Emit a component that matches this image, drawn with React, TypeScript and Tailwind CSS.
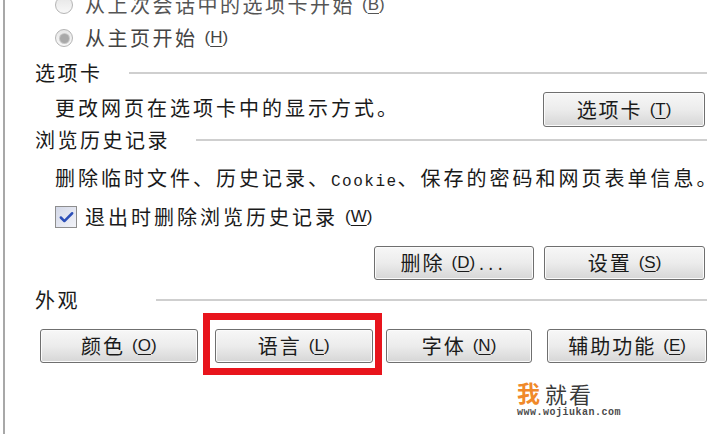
import { Check } from "lucide-react";

const cjk = "font-['Noto_Sans_CJK_SC',sans-serif]";

function Key({ k }: { k: string }) {
  return (
    <span className="ml-[7px] text-[17px] tracking-normal font-['Liberation_Sans',sans-serif]">
      (<span className="underline underline-offset-[3px]">{k}</span>)
    </span>
  );
}

function Btn({ label, k, tail, className }: { label: string; k: string; tail?: string; className: string }) {
  return (
    <button
      className={`h-[34px] rounded-[3px] border border-[#6f6f6f] bg-linear-to-b from-[#f7f7f7] via-[#ececec] to-[#d6d6d6] shadow-[inset_0_0_0_1px_#fbfbfb] flex items-center justify-center text-[20px] tracking-[2px] text-[#1a1a1a] ${className}`}
    >
      {label}
      <Key k={k} />
      {tail && <span className="ml-[4px] tracking-[5px] text-[16px]">{tail}</span>}
    </button>
  );
}

function Radio({ on }: { on?: boolean }) {
  return (
    <span className="w-[18px] h-[18px] rounded-full border border-[#b4b4b4] bg-linear-to-b from-[#e6e6e6] to-[#f8f8f8] flex items-center justify-center">
      {on && <span className="w-[9px] h-[9px] rounded-full bg-[#a9a9a9] ring-1 ring-[#c8c8c8]" />}
    </span>
  );
}

function Heading({ title, gap }: { title: string; gap: string }) {
  return (
    <div className="flex items-center">
      <span className="text-[20px] tracking-[2.5px] text-[#1a1a1a]">{title}</span>
      <span className={`flex-1 h-[2px] bg-[#cfcfcf] ${gap}`} />
    </div>
  );
}

export default function App() {
  return (
    <div className={`w-[721px] h-[434px] overflow-hidden bg-white ${cjk}`}>
      <div className="ml-[3px] h-full border-l-2 border-[#a8a8a8] pl-[30px] pr-[14px] flex flex-col">
        <div className="-mt-[12px] h-[34px] flex items-center pl-[20px] text-[20px] tracking-[2.5px] text-[#555]">
          <Radio />
          <span className="ml-[12px]">从上次会话中的选项卡开始</span>
          <Key k="B" />
        </div>
        <div className="h-[32px] flex items-center pl-[20px] text-[20px] tracking-[2.5px] text-[#444]">
          <Radio on />
          <span className="ml-[12px]">从主页开始</span>
          <Key k="H" />
        </div>

        <div className="h-[38px] flex flex-col justify-center">
          <Heading title="选项卡" gap="ml-[26px]" />
        </div>
        <div className="h-[35px] flex items-center justify-between pl-[20px]">
          <span className="text-[20px] tracking-[3px] text-[#1a1a1a] -mt-[3px]">更改网页在选项卡中的显示方式。</span>
          <Btn label="选项卡" k="T" className="w-[162px] h-[35px] mr-[2px]" />
        </div>

        <div className="h-[26px] flex flex-col justify-center">
          <Heading title="浏览历史记录" gap="ml-[26px]" />
        </div>
        <div className="h-[50px] flex items-center pl-[20px]">
          <span className="text-[20px] tracking-[3px] text-[#1a1a1a] whitespace-nowrap">
            删除临时文件、历史记录、
            <span className="font-['Liberation_Mono',monospace] text-[16px] tracking-[1.5px]">Cookie</span>
            、保存的密码和网页表单信息。
          </span>
        </div>
        <div className="h-[28px] flex items-center pl-[20px] text-[20px] tracking-[3px] text-[#1a1a1a]">
          <span className="w-[22px] h-[22px] border border-[#8e8e8e] bg-linear-to-br from-[#d3d8e8] to-[#f2f3f8] flex items-center justify-center">
            <Check className="w-[17px] h-[17px] text-[#2c4fb8]" strokeWidth={3.5} />
          </span>
          <span className="ml-[8px]">退出时删除浏览历史记录</span>
          <Key k="W" />
        </div>
        <div className="mt-[15px] flex justify-end gap-[10px]">
          <Btn label="删除" k="D" tail="..." className="w-[160px]" />
          <Btn label="设置" k="S" className="w-[161px] mr-[2px]" />
        </div>

        <div className="h-[40px] flex flex-col justify-center">
          <Heading title="外观" gap="ml-[76px]" />
        </div>
        <div className="mt-[9px] ml-[5px] flex">
          <Btn label="颜色" k="O" className="w-[158px]" />
          <div className="relative ml-[17px]">
            <Btn label="语言" k="L" className="w-[158px]" />
            <span className="absolute -left-[12px] -top-[16px] -right-[9px] -bottom-[12px] border-[7px] border-[#e8141c]" />
          </div>
          <Btn label="字体" k="N" className="w-[147px] ml-[13px]" />
          <Btn label="辅助功能" k="E" className="w-[160px] ml-[15px]" />
        </div>

        <div className="mt-[18px] ml-[482px] flex flex-col leading-none">
          <div className="flex items-end">
            <span className="text-[23px] font-bold text-[#f0892a]">我</span>
            <span className="ml-[5px] text-[22px] text-[#3a3a3a] tracking-[2px]">就看</span>
          </div>
          <span className="mt-[4px] font-['Liberation_Mono',monospace] text-[10px] font-bold text-[#4a4a4a] tracking-[0.5px]">
            www.wojiukan.com
          </span>
        </div>
      </div>
    </div>
  );
}
